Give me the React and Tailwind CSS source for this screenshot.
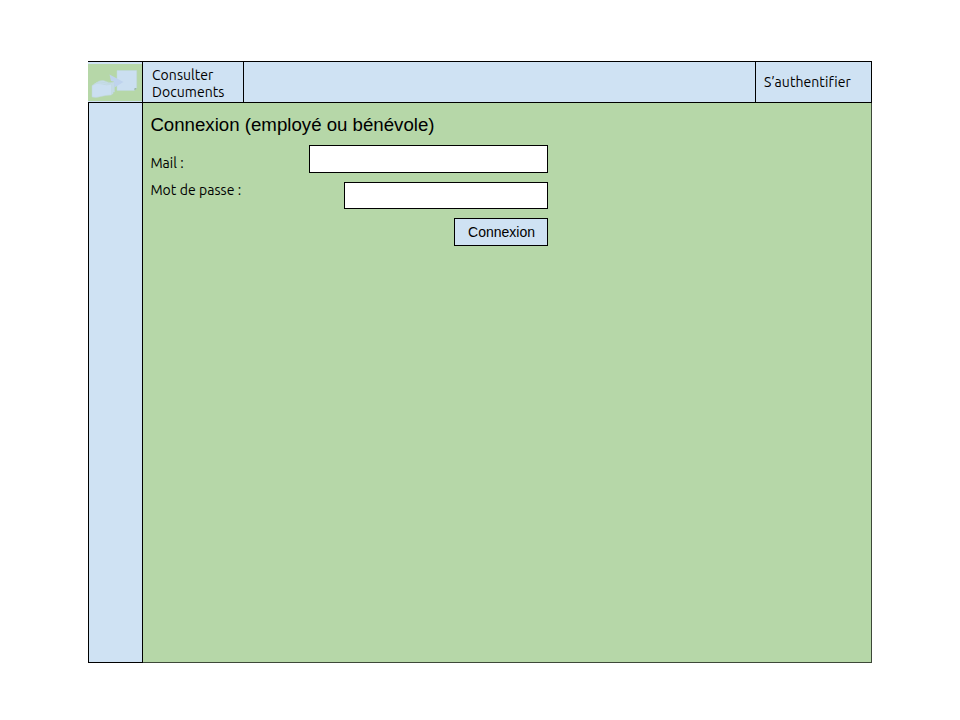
const ubuntu = "font-['Ubuntu','Noto_Sans',sans-serif] [font-variant-ligatures:none]";

function Logo() {
  return (
    <svg className="block h-[37px] w-[54px]" viewBox="0 0 54 37">
      <rect width="54" height="37" fill="#b6d7a8" />
      <g fill="#c6dcea" stroke="#bed6d8" strokeWidth="0.5">
        <path d="M8 19 Q13 15 18 17.5 T26.5 17.5 V28 Q22 28 18 29 T8 30 Z" />
        <path d="M6 20 Q11 16.5 16 18.5 T25 18.5 V30 Q20 30 16 31 T6 32 Z" />
        <path d="M4 21.5 Q9 18 14 20 T23.5 20 V31 Q18 31 13 32.5 T4 33 Z" fill="#cbdff1" />
      </g>
      <path d="M29 6.5 H48.7 V24 L46.5 26.5 H29 Z" fill="#cbdff1" stroke="#bfd8dc" strokeWidth="0.5" />
      <path d="M46.5 26.5 V24.2 H48.7 Z" fill="#8dab92" />
      <path d="M21.5 10.5 L35.5 18 L26.5 23.5 L26 17.5 L23 17 Z" fill="#bfd3ee" />
    </svg>
  );
}

export default function App() {
  return (
    <div className="h-[720px] w-[960px] overflow-hidden bg-white pl-[88px] pt-[61px] text-black">
      <div className="flex h-[602px] w-[784px] flex-col">
        <header className="flex h-[42px] shrink-0 border-y border-black bg-[#cfe2f3]">
          <div className="w-[55px] border-r border-black pt-[2px]">
            <Logo />
          </div>
          <nav className={`w-[101px] border-r border-black pl-[9px] pt-[5px] text-[14px] leading-[17px] tracking-[0.05px] ${ubuntu}`}>
            <a className="block">Consulter</a>
            <a className="block">Documents</a>
          </nav>
          <div className="flex-1" />
          <a className={`w-[117px] border-x border-black pl-2 pt-[12px] text-[14px] leading-[17px] tracking-[0.06px] ${ubuntu}`}>
            S’authentifier
          </a>
        </header>
        <div className="flex flex-1">
          <aside className="w-[55px] border-x border-b border-black bg-[#cfe2f3]" />
          <main className="flex-1 border-b border-r border-[#3d4838] bg-[#b6d7a8] pl-[7px]">
            <h1 className="h-[42px] pl-[0.4px] pt-[11px] font-['Liberation_Sans',Arial,sans-serif] text-[18.67px] leading-[22px]">
              Connexion (employé ou bénévole)
            </h1>
            <form className="w-[398px]">
              <div className="flex justify-between">
                <label className={`pl-[0.4px] pt-[9px] text-[14px] leading-[18px] tracking-[0.05px] ${ubuntu}`}>Mail :</label>
                <input className="h-[28px] w-[239px] border border-black bg-white" />
              </div>
              <div className="mt-[9px] flex justify-between">
                <label className={`pl-[0.4px] text-[14px] leading-[16px] tracking-[0.05px] ${ubuntu}`}>Mot de passe :</label>
                <input className="h-[27px] w-[204px] border border-black bg-white" />
              </div>
              <div className="mt-[9px] flex justify-end">
                <button
                  type="button"
                  className="h-[28px] w-[94px] border border-black bg-[#cfe2f3] pl-[1px] font-['Liberation_Sans',Arial,sans-serif] text-[14px] leading-[18px]"
                >
                  Connexion
                </button>
              </div>
            </form>
          </main>
        </div>
      </div>
    </div>
  );
}
